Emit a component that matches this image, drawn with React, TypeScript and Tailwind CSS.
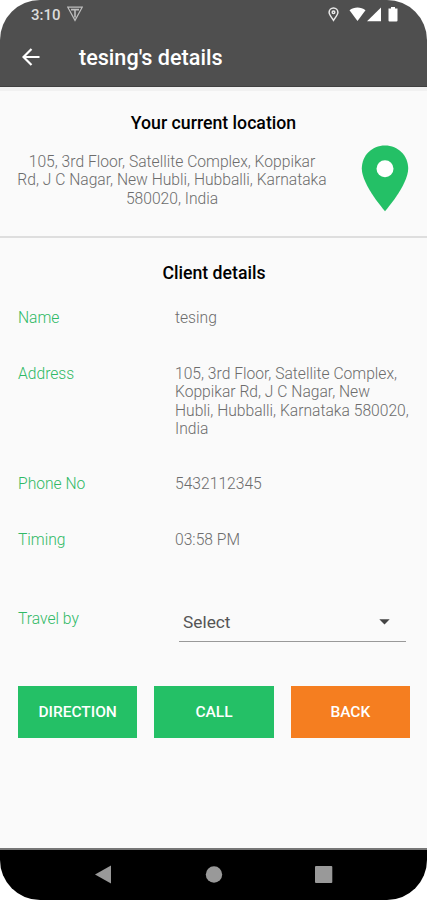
import type { ReactNode } from "react";

type DetailRowProps = {
  label: string;
  className: string;
  children: ReactNode;
};

function StatusBar() {
  return (
    <div className="flex h-[30px] items-center pl-[31px] pr-[29px] text-[#e4e4e4]">
      <span className="text-[15px] font-medium leading-[30px] text-[#dcdcdc]">3:10</span>
      <svg className="ml-[6px] mb-[2px] h-[16px] w-[16px]" viewBox="0 0 16 16" fill="none" stroke="#bdbdbd" strokeWidth="1.2">
        <path d="M.8 1.2h14.4L8 14.4z" />
        <path d="M4 3.6h8M8 3.6v8" strokeWidth="1.6" />
      </svg>
      <svg className="ml-auto mb-[2px] h-[15px] w-[11px]" viewBox="0 0 11 15" fill="none" stroke="#e8e8e8" strokeWidth="1.5">
        <path d="M5.5 13.3C3.7 10.5 1.1 7.8 1.1 5.3a4.4 4.4 0 0 1 8.8 0c0 2.5-2.6 5.2-4.4 8z" />
        <circle cx="5.5" cy="5.3" r="1.3" />
      </svg>
      <svg className="ml-[10px] mb-[2px] h-[15px] w-[49px]" viewBox="0 0 49 15" fill="#fff">
        <path d="M.5 3.2C5-.4 12-.4 16.5 3.2L8.5 14z" />
        <path d="M32 .5v13.8H18z" />
        <path d="M39.5 1.4H42V0h4v1.4h2.5v12a1 1 0 0 1-1 1h-7a1 1 0 0 1-1-1z" />
      </svg>
    </div>
  );
}

function Header() {
  return (
    <header className="h-[87px] border-b border-[#404040] bg-[#4f4f4f]">
      <StatusBar />
      <div className="flex h-[55px] items-center pl-[22px]">
        <button aria-label="Go back" className="mb-[2px]">
          <svg className="h-[18px] w-[18px]" viewBox="0 0 18 18" fill="none" stroke="#fff" strokeWidth="2.2">
            <path d="M17.5 9H2M9.5 1L1.5 9l8 8" />
          </svg>
        </button>
        <h1 className="ml-[39px] mt-px text-[21.6px] font-medium leading-7 text-white">tesing's details</h1>
      </div>
    </header>
  );
}

function DetailRow({ label, className, children }: DetailRowProps) {
  return (
    <div className={`flex ${className}`}>
      <dt className="w-[157px] shrink-0 text-[#2fb965]">{label}</dt>
      <dd className="whitespace-nowrap text-[#6c6c6c]">{children}</dd>
    </div>
  );
}

export default function App() {
  return (
    <div className="h-[900px] w-[427px] bg-white font-['Roboto',sans-serif]">
      <div className="flex h-full flex-col overflow-hidden rounded-[40px] bg-[#fafafa]">
        <Header />

        <section className="h-[151px] border-t-4 border-b-2 border-t-[#f1f1f1] border-b-[#dedede] pt-[20px]">
          <h2 className="text-center text-[17.7px] font-medium leading-6 text-black">Your current location</h2>
          <div className="flex pl-[15px]">
            <p className="mt-[18px] w-[314px] whitespace-nowrap text-center text-[15.65px] font-light leading-[18.3px] text-[#6c6c6c]">
              105, 3rd Floor, Satellite Complex, Koppikar
              <br />
              Rd, J C Nagar, New Hubli, Hubballi, Karnataka
              <br />
              580020, India
            </p>
            <svg className="ml-[32px] mt-[10px] h-[67px] w-[48px]" viewBox="0 0 48 67">
              <path
                d="M24 .5C10.8.5.8 10.7.8 23.6.8 40 24 66.300 24 66.300S47.200 40 47.200 23.600C47.200 10.700 37.200.5 24 .5z"
                fill="#24c066"
              />
              <circle cx="24" cy="23.8" r="8.5" fill="#fff" />
            </svg>
          </div>
        </section>

        <main className="flex-1 pl-[18px] pr-[17px]">
          <h2 className="mt-[23px] text-center text-[17.7px] font-medium leading-6 text-black">Client details</h2>

          <dl className="mt-[24px] text-[15.65px] font-light leading-[18.3px]">
            <DetailRow label="Name" className="h-[56px]">tesing</DetailRow>
            <DetailRow label="Address" className="h-[110px]">
              105, 3rd Floor, Satellite Complex,
              <br />
              Koppikar Rd, J C Nagar, New
              <br />
              Hubli, Hubballi, Karnataka 580020,
              <br />
              India
            </DetailRow>
            <DetailRow label="Phone No" className="h-[56px]">5432112345</DetailRow>
            <DetailRow label="Timing" className="h-[79px]">03:58 PM</DetailRow>
          </dl>

          <div className="flex">
            <span className="w-[161px] text-[15.65px] font-light leading-[18px] text-[#2fb965]">Travel by</span>
            <button className="flex h-[32px] w-[227px] items-center border-b border-[#999] pl-1 pr-[16px] pb-[7px] text-[17.3px] leading-5 text-[#555]">
              Select
              <svg className="ml-auto h-[6px] w-[11px]" viewBox="0 0 11 6">
                <path d="M.3.3h10.4L5.5 5.6z" fill="#444" />
              </svg>
            </button>
          </div>

          <div className="mt-[44px] grid grid-cols-3 gap-[17px] text-[15.5px] font-medium text-white">
            <button className="h-[52px] bg-[#24c066] pt-[2px]">DIRECTION</button>
            <button className="h-[52px] bg-[#24c066] pt-[2px]">CALL</button>
            <button className="h-[52px] bg-[#f57e20] pt-[2px]">BACK</button>
          </div>
        </main>

        <nav className="h-[52px] border-t-2 border-[#777] bg-black">
          <svg className="h-[50px] w-full" viewBox="0 0 427 50" fill="#999">
            <path d="M95 24.5l16-9v18z" />
            <circle cx="214" cy="24.5" r="8.2" />
            <rect x="315" y="16" width="17.3" height="17" rx="1" />
          </svg>
        </nav>
      </div>
    </div>
  );
}
